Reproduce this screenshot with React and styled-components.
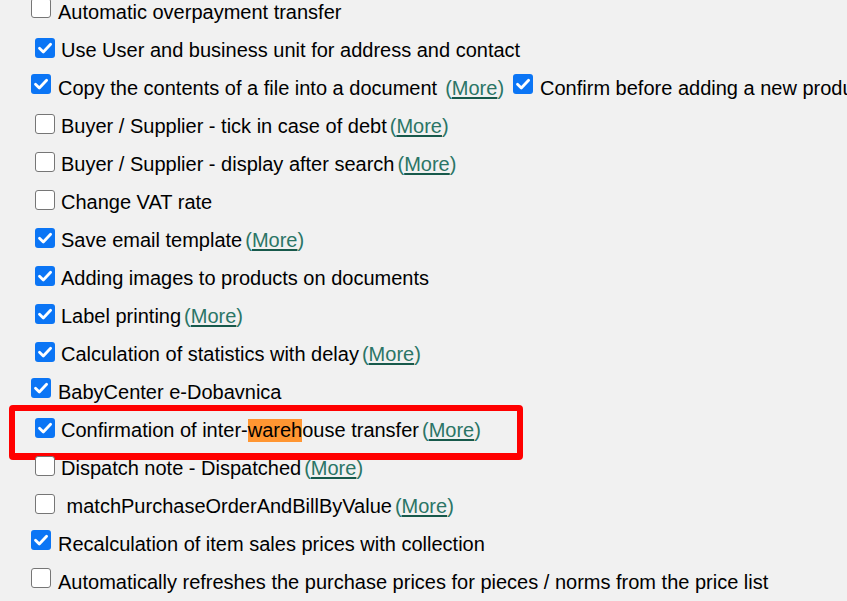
import React from 'react'
import styled, { createGlobalStyle } from 'styled-components'

const GlobalStyle = createGlobalStyle`
    html, body {
        margin: 0;
        padding: 0;
        background: #f1f1f1;
        overflow: hidden;
    }
    body {
        font-family: 'Liberation Sans', Arial, sans-serif;
        color: #000;
    }
`

const List = styled.div`
    display: flex;
    flex-direction: column;
    margin-top: -7px;
    width: 847px;
    height: 610px;
    overflow: hidden;
`

const Row = styled.div`
    position: relative;
    display: flex;
    align-items: center;
    height: 38px;
    padding-left: ${(p) => (p.$inset ? '35px' : '31px')};
    font-size: 20px;
    white-space: pre;
`

const Box = styled.span`
    flex: none;
    box-sizing: border-box;
    width: 20px;
    height: 20px;
    margin-right: ${(p) => (p.$inset ? '6px' : '7px')};
    margin-left: ${(p) => p.$gap || 0}px;
    margin-bottom: ${(p) => (p.$inset ? '4px' : '8px')};
    border-radius: 3px;
    display: flex;
    align-items: center;
    justify-content: center;
    background: ${(p) => (p.$checked ? '#0b75f5' : '#fff')};
    border: ${(p) => (p.$checked ? 'none' : '1.5px solid #767676')};
    svg {
        display: block;
    }
`

const More = styled.span`
    color: #2b7566;
    margin-left: ${(p) => p.$gap || 3}px;
    u {
        text-decoration-color: #17594b;
        text-decoration-thickness: 2px;
        text-underline-offset: 2px;
    }
`

const Mark = styled.mark`
    background: #ff9632;
    color: inherit;
`

const Frame = styled.div`
    position: absolute;
    left: 9px;
    top: -6px;
    width: 514px;
    height: 55px;
    box-sizing: border-box;
    border: 6px solid #ff0000;
    border-bottom-width: 7px;
    border-radius: 4px;
    pointer-events: none;
`

function Check({ checked, inset, gap }) {
    return (
        <Box $checked={checked} $inset={inset} $gap={gap}>
            {checked && (
                <svg width="20" height="20" viewBox="0 0 20 20">
                    <polyline
                        points="4.5,10.2 8.3,14 15.6,6.2"
                        fill="none"
                        stroke="#fff"
                        strokeWidth="2.8"
                        strokeLinecap="round"
                        strokeLinejoin="round"
                    />
                </svg>
            )}
        </Box>
    )
}

function MoreLink({ gap }) {
    return (
        <More $gap={gap}>
            (<u>More</u>)
        </More>
    )
}

const rows = [
    { label: 'Automatic overpayment transfer', checked: false },
    { label: 'Use User and business unit for address and contact', checked: true, inset: true },
    { label: 'Buyer / Supplier - tick in case of debt', checked: false, inset: true, more: true },
    { label: 'Buyer / Supplier - display after search', checked: false, inset: true, more: true },
    { label: 'Change VAT rate', checked: false, inset: true },
    { label: 'Save email template', checked: true, inset: true, more: true },
    { label: 'Adding images to products on documents', checked: true, inset: true },
    { label: 'Label printing', checked: true, inset: true, more: true },
    { label: 'Calculation of statistics with delay', checked: true, inset: true, more: true },
    { label: 'BabyCenter e-Dobavnica', checked: true },
]

const tail = [
    { label: 'Dispatch note - Dispatched', checked: false, inset: true, more: true },
    { label: ' matchPurchaseOrderAndBillByValue', checked: false, inset: true, more: true },
    { label: 'Recalculation of item sales prices with collection', checked: true },
    { label: 'Automatically refreshes the purchase prices for pieces / norms from the price list', checked: false },
]

function Option({ label, checked, inset, more }) {
    return (
        <Row $inset={inset}>
            <Check checked={checked} inset={inset} />
            {label}
            {more && <MoreLink />}
        </Row>
    )
}

export default function App() {
    return (
        <>
            <GlobalStyle />
            <List>
                <Option {...rows[0]} />
                <Option {...rows[1]} />
                <Row>
                    <Check checked />
                    Copy the contents of a file into a document
                    <MoreLink gap={8} />
                    <Check checked gap={9} />
                    Confirm before adding a new product to the document
                </Row>
                {rows.slice(2).map((r) => (
                    <Option key={r.label} {...r} />
                ))}
                <Row $inset>
                    <Check checked inset />
                    Confirmation of inter-<Mark>wareh</Mark>ouse transfer
                    <MoreLink />
                    <Frame />
                </Row>
                {tail.map((r) => (
                    <Option key={r.label} {...r} />
                ))}
            </List>
        </>
    )
}
